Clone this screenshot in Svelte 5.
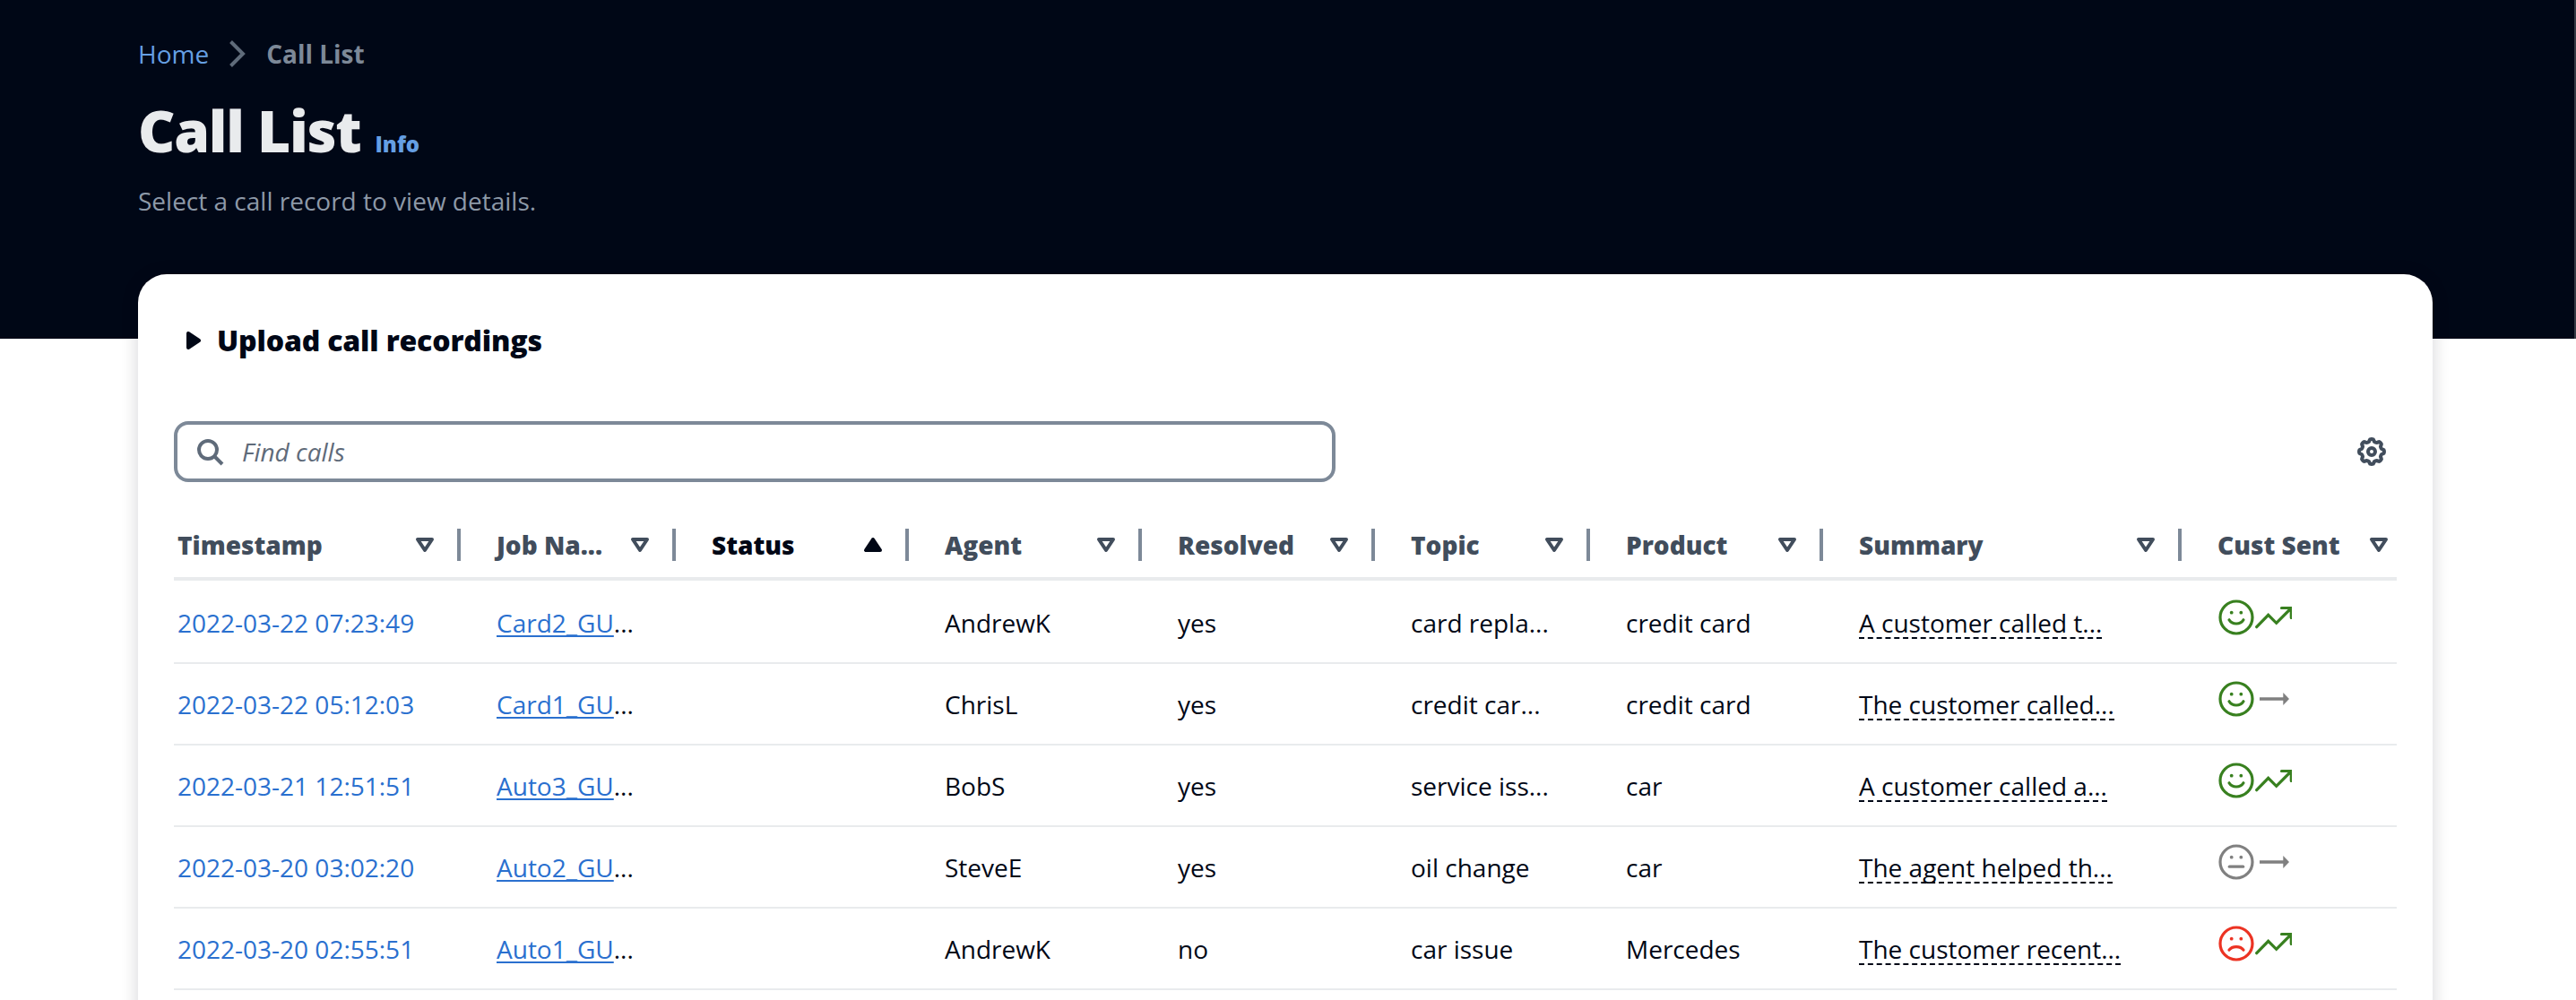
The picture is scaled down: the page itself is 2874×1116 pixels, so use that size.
<script>
  const columns = [
    { key: 'time', label: 'Timestamp' },
    { key: 'job', label: 'Job Na...' },
    { key: 'status', label: 'Status', sorted: true },
    { key: 'agent', label: 'Agent' },
    { key: 'resolved', label: 'Resolved' },
    { key: 'topic', label: 'Topic' },
    { key: 'product', label: 'Product' },
    { key: 'summary', label: 'Summary' },
    { key: 'sentiment', label: 'Cust Sent' }
  ];

  const calls = [
    { time: '2022-03-22 07:23:49', job: 'Card2_GU', agent: 'AndrewK', resolved: 'yes', topic: 'card repla...', product: 'credit card', summary: 'A customer called t...', mood: 'happy', trend: 'up' },
    { time: '2022-03-22 05:12:03', job: 'Card1_GU', agent: 'ChrisL', resolved: 'yes', topic: 'credit car...', product: 'credit card', summary: 'The customer called...', mood: 'happy', trend: 'flat' },
    { time: '2022-03-21 12:51:51', job: 'Auto3_GU', agent: 'BobS', resolved: 'yes', topic: 'service iss...', product: 'car', summary: 'A customer called a...', mood: 'happy', trend: 'up' },
    { time: '2022-03-20 03:02:20', job: 'Auto2_GU', agent: 'SteveE', resolved: 'yes', topic: 'oil change', product: 'car', summary: 'The agent helped th...', mood: 'neutral', trend: 'flat' },
    { time: '2022-03-20 02:55:51', job: 'Auto1_GU', agent: 'AndrewK', resolved: 'no', topic: 'car issue', product: 'Mercedes', summary: 'The customer recent...', mood: 'sad', trend: 'up' }
  ];

  const mouths = {
    happy: 'M12 22.8Q14.5 27 20 27T28 22.8',
    neutral: 'M12.3 25.2H27.7',
    sad: 'M12 27.2Q14.5 23.6 20 23.6T28 27.2'
  };

  // Eight-lobed gear outline centred in a 32px box.
  const gear = Array.from({ length: 96 }, (_, i) => {
    const a = (i / 96) * Math.PI * 2;
    const r = 12.6 + 1.4 * Math.tanh(2 * Math.cos(8 * a));
    return `${i ? 'L' : 'M'}${(16 + r * Math.cos(a)).toFixed(2)} ${(16 + r * Math.sin(a)).toFixed(2)}`;
  }).join('') + 'Z';
</script>

<div class="page">
  <header class="hero">
    <nav class="crumbs">
      <a href="#home">Home</a>
      <svg class="chevron" viewBox="0 0 32 32"><path d="M8.5 2.5 22 16 8.5 29.5" /></svg>
      <span>Call List</span>
    </nav>
    <div class="title">
      <h1>Call List</h1>
      <a class="info" href="#info">Info</a>
    </div>
    <p>Select a call record to view details.</p>
  </header>

  <main class="card">
    <div class="upload">
      <svg class="expand" viewBox="0 0 16 20"><path d="M2 2V18L14 10Z" /></svg>
      <h2>Upload call recordings</h2>
    </div>

    <div class="tools">
      <label class="search">
        <svg viewBox="0 0 32 32"><circle cx="14" cy="14" r="10" /><path d="M21 21 30 30" /></svg>
        <input type="text" placeholder="Find calls" />
      </label>
      <button class="prefs" aria-label="Preferences">
        <svg viewBox="0 0 32 32"><path d={gear} /><circle cx="16" cy="16" r="4" /></svg>
      </button>
    </div>

    <div class="row head">
      {#each columns as col}
        <div class="cell" class:sorted={col.sorted}>
          <span>{col.label}</span>
          <svg class="sort" viewBox="0 0 16 16">
            <path d={col.sorted ? 'M4 11H12L8 5Z' : 'M4 5H12L8 11Z'} />
          </svg>
        </div>
      {/each}
    </div>

    {#each calls as call}
      <div class="row">
        <div class="cell"><a href="#call">{call.time}</a></div>
        <div class="cell"><a class="job" href="#job">{call.job}</a>...</div>
        <div class="cell"></div>
        <div class="cell">{call.agent}</div>
        <div class="cell">{call.resolved}</div>
        <div class="cell">{call.topic}</div>
        <div class="cell">{call.product}</div>
        <div class="cell"><span class="summary">{call.summary}</span></div>
        <div class="cell sentiment">
          <svg class="face {call.mood}" viewBox="0 0 40 40">
            <circle class="line" cx="20" cy="20" r="18" />
            <circle class="eye" cx="14.7" cy="14.7" r="1.9" />
            <circle class="eye" cx="25.3" cy="14.7" r="1.9" />
            <path class="line" d={mouths[call.mood]} />
          </svg>
          {#if call.trend === 'up'}
            <svg class="trend up" viewBox="0 0 42 40">
              <path d="M2.7 30.7 15.7 17.3 24.7 26.3 41 10M30.5 9.5H41.3V20.5" />
            </svg>
          {:else}
            <svg class="trend flat" viewBox="0 0 42 40">
              <path d="M6 18.2H32.3V13L39 20 32.3 27V21.8H6Z" />
            </svg>
          {/if}
        </div>
      </div>
    {/each}
  </main>
</div>

<style>
  :global(body) {
    margin: 0;
    background: #fff;
  }

  .page {
    box-sizing: border-box;
    height: 1116px;
    overflow: hidden;
    color: #000716;
    font: 400 28px/40px 'Open Sans', 'Noto Sans', sans-serif;
  }

  a {
    color: #2a70cf;
    text-decoration: none;
  }

  svg {
    display: block;
    flex: none;
    fill: none;
    stroke: currentColor;
  }

  .hero {
    box-sizing: border-box;
    height: 378px;
    padding: 40px 154px 0;
    background: #000716;
    border-right: 2px solid #353b45;
  }

  .hero a {
    color: #659fe3;
  }

  .crumbs {
    display: flex;
    align-items: center;
    height: 40px;
    color: #7d8998;
    font-weight: 700;
  }

  .crumbs a {
    font-weight: 400;
  }

  .chevron {
    width: 32px;
    height: 32px;
    margin: 0 16px;
    color: #5f6b7a;
    stroke-width: 4;
  }

  .title {
    display: flex;
    align-items: baseline;
    gap: 16px;
    height: 80px;
    margin-top: 26px;
  }

  h1 {
    margin: 0;
    color: #e9ebed;
    font-size: 64px;
    font-weight: 800;
    line-height: 80px;
    letter-spacing: -1.28px;
  }

  .hero .info {
    font-size: 24px;
    font-weight: 800;
  }

  .hero p {
    margin: 18px 0 0;
    color: #8d99a8;
  }

  .card {
    position: relative;
    box-sizing: border-box;
    width: 2560px;
    height: 900px;
    margin: -72px 0 0 154px;
    padding: 0 40px;
    background: #fff;
    border-radius: 32px 32px 0 0;
    box-shadow: 0 2px 16px 4px rgba(0, 7, 22, 0.12);
  }

  .upload {
    display: flex;
    align-items: center;
    gap: 18px;
    height: 148px;
    padding-left: 14px;
  }

  .expand {
    width: 16px;
    height: 20px;
    fill: currentColor;
    stroke-width: 4;
    stroke-linejoin: round;
  }

  h2 {
    margin: 0;
    font-size: 32px;
    font-weight: 800;
    line-height: 40px;
    letter-spacing: -0.16px;
  }

  .tools {
    display: flex;
    align-items: center;
    justify-content: space-between;
    margin-top: 16px;
  }

  .search {
    display: flex;
    align-items: center;
    gap: 20px;
    box-sizing: border-box;
    width: 1296px;
    height: 68px;
    padding: 0 20px;
    border: 4px solid #7d8998;
    border-radius: 16px;
    color: #5f6b7a;
  }

  .search svg,
  .prefs svg {
    width: 32px;
    height: 32px;
    stroke-width: 4;
  }

  .search input {
    flex: 1;
    padding: 0;
    border: 0;
    outline: 0;
    background: none;
    font: inherit;
  }

  .search input::placeholder {
    color: #5f6b7a;
    font-style: italic;
    opacity: 1;
  }

  .prefs {
    padding: 0;
    margin-right: 12px;
    border: 0;
    background: none;
    color: #414d5c;
  }

  .row {
    display: grid;
    grid-template-columns: 318px 240px 260px 260px 260px 240px 260px 400px 242px;
    box-sizing: border-box;
    height: 91px;
    border-bottom: 2px solid #e9ebed;
  }

  .cell {
    box-sizing: border-box;
    padding: 25px 0 0 42px;
    white-space: nowrap;
  }

  .cell:first-child {
    padding-left: 4px;
  }

  .head {
    height: 110px;
    border-bottom: 4px solid #e9ebed;
    color: #414d5c;
    font-weight: 800;
    margin-bottom: 2px;
  }

  .head .cell {
    display: flex;
    align-items: center;
    justify-content: space-between;
    align-self: start;
    height: 36px;
    margin-top: 52px;
    padding: 0 20px 0 40px;
    border-right: 4px solid #7d8998;
    transform: translateX(2px);
  }

  .head .cell:first-child {
    padding-left: 2px;
  }

  .head .cell:last-child {
    padding-right: 2px;
    border-right-color: transparent;
  }

  .head .sorted {
    color: #000716;
  }

  .sort {
    width: 32px;
    height: 32px;
    stroke-width: 2;
    stroke-linejoin: round;
  }

  .sorted .sort {
    fill: currentColor;
  }

  .job {
    text-decoration: underline;
    text-decoration-thickness: 2px;
    text-underline-offset: 3px;
    text-decoration-skip-ink: none;
  }

  .summary {
    display: inline-block;
    height: 36px;
    border-bottom: 2px dashed #000716;
    line-height: 40px;
  }

  .sentiment {
    display: flex;
    padding: 19px 0 0 43px;
  }

  .face {
    width: 40px;
    height: 40px;
  }

  .line {
    stroke-width: 3.2;
    stroke-linecap: round;
  }

  .eye {
    fill: currentColor;
    stroke: none;
  }

  .happy,
  .up {
    color: #38801f;
  }

  .neutral,
  .flat {
    color: #808080;
  }

  .sad {
    color: #ec3323;
  }

  .trend {
    width: 42px;
    height: 40px;
    stroke-width: 3.2;
    stroke-linecap: round;
  }

  .flat {
    fill: currentColor;
    stroke: none;
  }
</style>
